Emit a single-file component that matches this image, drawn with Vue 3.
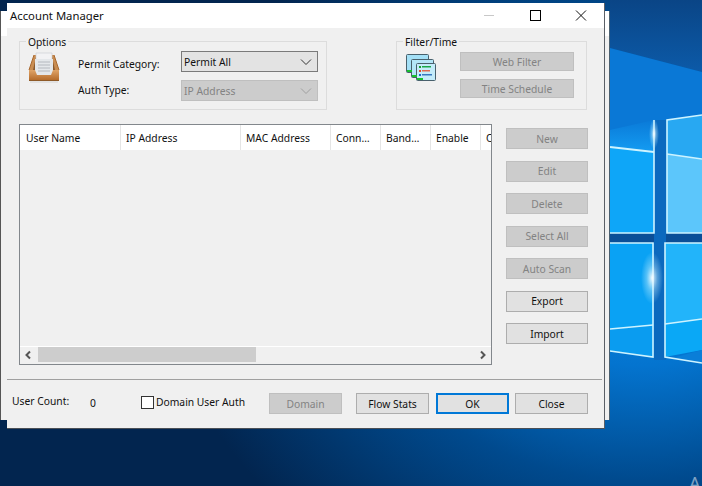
<script setup>
const columns = [
  { label: 'User Name', width: 101 },
  { label: 'IP Address', width: 120 },
  { label: 'MAC Address', width: 90 },
  { label: 'Conn…', width: 50 },
  { label: 'Band…', width: 50 },
  { label: 'Enable', width: 50 },
  { label: 'C', width: 10 }
]
const sideButtons = [
  { label: 'New', disabled: true },
  { label: 'Edit', disabled: true },
  { label: 'Delete', disabled: true },
  { label: 'Select All', disabled: true },
  { label: 'Auto Scan', disabled: true },
  { label: 'Export', disabled: false },
  { label: 'Import', disabled: false }
]
</script>

<template>
  <div class="desktop">
    <svg class="wallpaper" width="702" height="486" viewBox="0 0 702 486">
      <defs>
        <radialGradient id="bg" gradientUnits="userSpaceOnUse" cx="640" cy="250" r="480" gradientTransform="translate(0 50) scale(1 .8)">
          <stop offset="0" stop-color="#0a8ce6" />
          <stop offset=".3" stop-color="#0474cf" />
          <stop offset=".6" stop-color="#004a8e" />
          <stop offset="1" stop-color="#02254f" />
        </radialGradient>
        <linearGradient id="sky" x1="0" y1="0" x2="0" y2="1">
          <stop offset="0" stop-color="#0a4586" />
          <stop offset="1" stop-color="#0c5aa8" />
        </linearGradient>
        <linearGradient id="upper" x1="0" y1="0" x2="0" y2="1">
          <stop offset="0" stop-color="#0a7ad8" />
          <stop offset="1" stop-color="#149cf2" />
        </linearGradient>
        <radialGradient id="glow">
          <stop offset="0" stop-color="#fff" stop-opacity=".95" />
          <stop offset=".5" stop-color="#c8f0ff" stop-opacity=".4" />
          <stop offset="1" stop-color="#c8f0ff" stop-opacity="0" />
        </radialGradient>
      </defs>
      <rect width="702" height="486" fill="url(#bg)" />
      <polygon points="610,0 702,0 702,72 610,48" fill="url(#sky)" />
      <polygon points="610,48 702,72 702,118 610,135" fill="#0a78d6" />
      <rect x="610" y="233" width="92" height="10" fill="#0a4f98" />
      <rect x="654" y="120" width="12" height="240" fill="#0b69be" />

      <polygon points="610,130 654,120 654,152 610,147" fill="url(#upper)" />
      <polygon points="610,147 654,152 654,233 610,233" fill="#0ea6f8" />
      <polygon points="667,120 702,115 702,159 667,154" fill="#28a8f2" />
      <polygon points="667,154 702,159 702,233 667,233" fill="#5cc6fb" />
      <polygon points="610,243 653,243 653,325 610,329" fill="#0aa2f4" />
      <polygon points="610,329 653,325 653,357 610,351" fill="#0a9cf0" />
      <polygon points="665,243 702,243 702,319 665,324" fill="#22b4fa" />
      <polygon points="665,324 702,319 702,350 665,357" fill="#0aa8f6" />
      <polygon points="672,358 702,350 702,363" fill="#0a7ed8" />

      <g fill="none" stroke="#cdf3ff" stroke-width="1.6">
        <path d="M610 147L654 152" stroke-width="2" />
        <path d="M654 120V233H610" />
        <path d="M702 115L667 120V233H702" />
        <path d="M667 154L702 159" />
        <path d="M610 329L653 325" />
        <path d="M610 351L653 357V243H610" />
        <path d="M702 243H665V357L702 363" />
        <path d="M665 324L702 319" />
      </g>
      <ellipse cx="654" cy="134" rx="5" ry="15" fill="url(#glow)" />
      <ellipse cx="652" cy="278" rx="11" ry="26" fill="url(#glow)" />
    </svg>
    <span class="activate">A</span>

    <div class="back-window"></div>

    <div class="window">
      <header class="titlebar">
        <span class="title">Account Manager</span>
        <div class="controls">
          <svg class="ctl" width="46" height="25" viewBox="0 0 46 25"><path d="M18 12.500h10" stroke="#c8c8c8" /></svg>
          <svg class="ctl" width="46" height="25" viewBox="0 0 46 25"><rect x="18.500" y="7.500" width="10" height="10" fill="none" stroke="#000" /></svg>
          <svg class="ctl" width="46" height="25" viewBox="0 0 46 25"><path d="M18 7.500l10 10M28 7.500l-10 10" stroke="#111" fill="none" /></svg>
        </div>
      </header>

      <div class="content">
        <div class="groups">
          <section class="group options">
            <span class="legend">Options</span>
            <svg class="tray" width="32" height="32" viewBox="0 0 32 32">
              <defs>
                <linearGradient id="front" x1="0" y1="0" x2="0" y2="1">
                  <stop offset="0" stop-color="#e0a468" />
                  <stop offset="1" stop-color="#b56c2c" />
                </linearGradient>
              </defs>
              <path d="M6 3h20l5 15H1z" fill="#c98d52" />
              <path d="M8 5h16l3 13H5z" fill="#8a5a2e" />
              <path d="M8 1h16v21H8z" fill="#f2f2f4" stroke="#c6cad0" stroke-width=".6" />
              <path d="M7 7h18v16H7z" fill="#e4e7ea" />
              <path d="M10 10h12M10 13h12M10 16h12M10 19h12" stroke="#b4b8be" />
              <path d="M1 18h6l2 5h14l2-5h6v10H1z" fill="url(#front)" />
              <path d="M1 18l5-15M31 18L26 3" stroke="#a8682e" fill="none" />
              <path d="M1 28.500h30" stroke="#8e5a28" />
              <path d="M2 30h28" stroke="#d4d4d4" />
            </svg>
            <div class="form">
              <label class="field-label first">Permit Category:</label>
              <div class="combo">
                <span>Permit All</span>
                <svg width="12" height="8" viewBox="0 0 12 8"><path d="M1 1.500l5 5 5-5" fill="none" stroke="#333" /></svg>
              </div>
              <label class="field-label">Auth Type:</label>
              <div class="combo off">
                <span>IP Address</span>
                <svg width="12" height="8" viewBox="0 0 12 8"><path d="M1 1.500l5 5 5-5" fill="none" stroke="#a0a0a0" /></svg>
              </div>
            </div>
          </section>

          <section class="group filter">
            <span class="legend">Filter/Time</span>
            <svg class="stack" width="31" height="28" viewBox="0 0 31 28">
              <g stroke="#48606c" stroke-width="1">
                <rect x=".5" y=".5" width="22" height="18" rx="1" fill="#a4e0f6" />
                <rect x="5.500" y="5.500" width="22" height="18" rx="1" fill="#b4e6f8" />
                <rect x="10.500" y="9.500" width="19" height="17" rx="1" fill="#c4ecfa" />
              </g>
              <path d="M1 16h5v2H1zM6 21h5v2H6zM11 24h6v2h-6z" fill="#18c030" />
              <path d="M13 12h2v2h-2z" fill="#18a030" />
              <path d="M16 12h9v1.500h-9z" fill="#18a848" />
              <path d="M13 16h2v2h-2z" fill="#e04a30" />
              <path d="M16 16h8v1.500h-8z" fill="#e06a50" />
              <path d="M13 20h2v2h-2z" fill="#1a68c8" />
              <path d="M16 20h10v1.500H16z" fill="#3878c0" />
            </svg>
            <div class="filter-buttons">
              <button class="btn off">Web Filter</button>
              <button class="btn off">Time Schedule</button>
            </div>
          </section>
        </div>

        <div class="main">
          <div class="table">
            <div class="thead">
              <div v-for="c in columns" :key="c.label" class="th" :style="{ width: c.width + 'px' }">{{ c.label }}</div>
            </div>
            <div class="tbody"></div>
            <div class="scrollbar">
              <svg width="18" height="16" viewBox="0 0 18 16"><path d="M10 4.500L6.500 8l3.500 3.500" fill="none" stroke="#555" stroke-width="2" /></svg>
              <div class="track"><div class="thumb"></div></div>
              <svg width="18" height="16" viewBox="0 0 18 16"><path d="M8 4.500L11.500 8 8 11.500" fill="none" stroke="#555" stroke-width="2" /></svg>
            </div>
          </div>
          <div class="side">
            <button v-for="b in sideButtons" :key="b.label" class="btn" :class="{ off: b.disabled }">{{ b.label }}</button>
          </div>
        </div>
      </div>

      <div class="footer">
        <span class="count-label">User Count:</span>
        <span class="count">0</span>
        <span class="check-box"></span>
        <span class="check-label">Domain User Auth</span>
        <button class="btn off foot domain">Domain</button>
        <button class="btn foot flow">Flow Stats</button>
        <button class="btn foot ok">OK</button>
        <button class="btn foot close">Close</button>
      </div>
    </div>
  </div>
</template>

<style>
html, body { margin: 0; background: #02254f; }
</style>

<style scoped>
.desktop {
  position: relative;
  width: 702px;
  height: 486px;
  overflow: hidden;
  font-family: "Noto Sans", "Open Sans", sans-serif;
  font-size: 10.3px;
  color: #111;
}
.wallpaper { position: absolute; left: 0; top: 0; display: block; }
.activate {
  position: absolute;
  left: 689px;
  top: 472px;
  font-size: 18px;
  line-height: 22px;
  color: rgba(255, 255, 255, .5);
}
.back-window {
  position: absolute;
  left: 0;
  top: 11px;
  width: 609px;
  height: 409px;
  background: linear-gradient(#fff 0, #fff 25px, #f0f0f0 25px);
  border-right: 1px solid #4a6070;
  box-shadow: inset 1px 0 0 #555;
}
.window {
  position: absolute;
  left: 7px;
  top: 3px;
  width: 597px;
  height: 425px;
  background: #f0f0f0;
  border-right: 1px solid #5a5f66;
  border-bottom: 1px solid #4a4f56;
  display: flex;
  flex-direction: column;
}
.titlebar {
  height: 25px;
  background: #fff;
  display: flex;
  justify-content: space-between;
  align-items: center;
  padding-left: 3px;
  flex: none;
}
.title { font-size: 11.3px; }
.controls { display: flex; }
.ctl { display: block; }
.content { padding: 13px 17px 0 12px; flex: 1; }
.groups { display: flex; justify-content: space-between; }
.group {
  position: relative;
  height: 69px;
  box-sizing: border-box;
  border: 1px solid #dcdcdc;
  display: flex;
}
.legend {
  position: absolute;
  top: -7px;
  left: 6px;
  padding: 0 2px;
  background: #f0f0f0;
  line-height: 14px;
}
.options { width: 308px; padding: 9px 0 0 8px; }
.tray { margin-top: 1px; flex: none; }
.form {
  margin-left: 18px;
  display: grid;
  grid-template-columns: 103px 137px;
  grid-auto-rows: 21px;
  row-gap: 8px;
}
.field-label { line-height: 21px; }
.field-label.first { padding-top: 3px; }
.combo {
  box-sizing: border-box;
  border: 1px solid #7a7a7a;
  background: #e3e3e3;
  display: flex;
  align-items: center;
  justify-content: space-between;
  padding: 0 5px 0 2px;
}
.combo.off { border-color: #bfbfbf; background: #cccccc; color: #838383; }
.filter { width: 191px; padding: 10px 0 0 9px; }
.stack { flex: none; margin-top: 2px; }
.filter-buttons {
  margin-left: 23px;
  width: 114px;
  display: flex;
  flex-direction: column;
  gap: 8px;
}
.filter-buttons .btn { height: 19px; }
.btn {
  box-sizing: border-box;
  height: 21px;
  padding: 0;
  margin: 0;
  border: 1px solid #adadad;
  background: #e1e1e1;
  color: #111;
  font: inherit;
  display: block;
  width: 100%;
}
.btn.off { background: #cccccc; border-color: #bfbfbf; color: #838383; }
.main { display: flex; margin-top: 14px; }
.table {
  box-sizing: border-box;
  width: 473px;
  height: 241px;
  border: 1px solid #82878c;
  display: flex;
  flex-direction: column;
  overflow: hidden;
  flex: none;
}
.thead { display: flex; height: 25px; background: #fff; flex: none; }
.th {
  box-sizing: border-box;
  flex: none;
  padding-left: 5px;
  line-height: 26px;
  border-right: 1px solid #e5e5e5;
  white-space: nowrap;
  overflow: hidden;
}
.th:first-child { padding-left: 6px; }
.th:last-child { border-right: 0; }
.tbody { flex: 1; }
.scrollbar {
  height: 18px;
  box-sizing: border-box;
  border-top: 1px solid #fff;
  display: flex;
  align-items: flex-start;
  flex: none;
}
.scrollbar svg { display: block; flex: none; }
.track { flex: 1; height: 15px; }
.thumb { width: 218px; height: 15px; background: #cdcdcd; }
.side {
  margin: 4px 0 0 14px;
  width: 82px;
  display: flex;
  flex-direction: column;
  gap: 11.5px;
  flex: none;
}
.footer {
  height: 49px;
  margin-right: 2px;
  box-sizing: border-box;
  border-top: 1px solid #a0a0a0;
  display: flex;
  align-items: flex-start;
  flex: none;
  margin-top: auto;
}
.count-label { margin: 14px 0 0 5px; width: 78px; }
.count { margin-top: 16px; width: 51px; }
.check-box {
  box-sizing: border-box;
  width: 13px;
  height: 13px;
  margin-top: 16px;
  border: 1px solid #333;
  background: #fff;
  flex: none;
}
.check-label { margin: 15px 0 0 2px; width: 113px; white-space: nowrap; }
.foot { width: 73px; margin-top: 13px; flex: none; }
.flow { margin-left: 14px; }
.ok { margin-left: 7px; border: 2px solid #0078d7; }
.close { margin-left: 6px; }
</style>
